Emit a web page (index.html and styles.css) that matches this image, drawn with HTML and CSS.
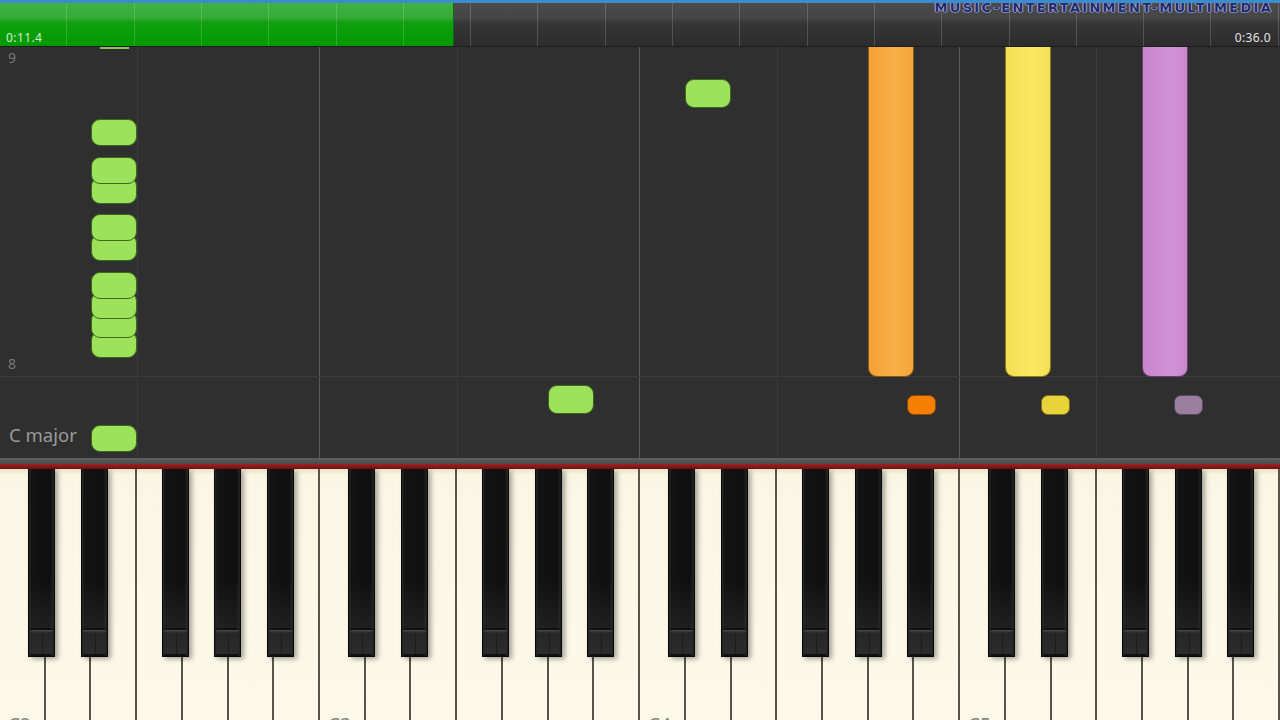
FILE: index.html
```html
<!DOCTYPE html>
<html>
<head>
<meta charset="utf-8">
<link rel="stylesheet" href="styles.css">
</head>
<body>
<div class="app">
  <header class="timeline">
    <div class="progress" style="width:454px"></div>
    <div class="rest"></div>
    <span class="time time-left">0:11.4</span>
    <span class="time time-right">0:36.0</span>
    <span class="watermark">MUSIC-ENTERTAINMENT-MULTIMEDIA</span>
  </header>

  <main class="roll">
    <div class="vline faint" style="left:137px"></div>
    <div class="vline bar" style="left:319px"></div>
    <div class="vline faint" style="left:457px"></div>
    <div class="vline bar" style="left:639px"></div>
    <div class="vline faint" style="left:777px"></div>
    <div class="vline bar" style="left:959px"></div>
    <div class="vline faint" style="left:1096px"></div>
    <div class="hline" style="top:329px"></div>

    <span class="octave" style="top:3px">9</span>
    <span class="octave" style="top:309px">8</span>
    <span class="key-label">C major</span>

    <div class="sliver"></div>

    <div class="note green" style="left:91px;top:72px"></div>
    <div class="note green" style="left:91px;top:130px"></div>
    <div class="note green" style="left:91px;top:110px"></div>
    <div class="note green" style="left:91px;top:187px"></div>
    <div class="note green" style="left:91px;top:167px"></div>
    <div class="note green" style="left:91px;top:284px"></div>
    <div class="note green" style="left:91px;top:264px"></div>
    <div class="note green" style="left:91px;top:245px"></div>
    <div class="note green" style="left:91px;top:225px"></div>
    <div class="note green" style="left:91px;top:378px"></div>
    <div class="note green" style="left:548px;top:338px;height:29px"></div>
    <div class="note green" style="left:685px;top:32px;height:29px"></div>

    <div class="note tall orange" style="left:868px"></div>
    <div class="note tall yellow" style="left:1005px"></div>
    <div class="note tall purple" style="left:1142px"></div>

    <div class="note small s-orange" style="left:907px"></div>
    <div class="note small s-yellow" style="left:1041px"></div>
    <div class="note small s-purple" style="left:1174px"></div>
  </main>

  <div class="rail"></div>
  <div class="redline"></div>

  <section class="keyboard">
    <div class="white c"><span class="kl">C2</span></div><div class="white"></div><div class="white"></div><div class="white"></div><div class="white"></div><div class="white"></div><div class="white"></div>
    <div class="white c"><span class="kl">C3</span></div><div class="white"></div><div class="white"></div><div class="white"></div><div class="white"></div><div class="white"></div><div class="white"></div>
    <div class="white c"><span class="kl">C4</span></div><div class="white"></div><div class="white"></div><div class="white"></div><div class="white"></div><div class="white"></div><div class="white"></div>
    <div class="white c"><span class="kl">C5</span></div><div class="white"></div><div class="white"></div><div class="white"></div><div class="white"></div><div class="white"></div><div class="white"></div>

    <div class="black" style="left:28px"><i></i></div>
    <div class="black" style="left:81px"><i></i></div>
    <div class="black" style="left:162px"><i></i></div>
    <div class="black" style="left:214px"><i></i></div>
    <div class="black" style="left:267px"><i></i></div>
    <div class="black" style="left:348px"><i></i></div>
    <div class="black" style="left:401px"><i></i></div>
    <div class="black" style="left:482px"><i></i></div>
    <div class="black" style="left:535px"><i></i></div>
    <div class="black" style="left:587px"><i></i></div>
    <div class="black" style="left:668px"><i></i></div>
    <div class="black" style="left:721px"><i></i></div>
    <div class="black" style="left:802px"><i></i></div>
    <div class="black" style="left:855px"><i></i></div>
    <div class="black" style="left:907px"><i></i></div>
    <div class="black" style="left:988px"><i></i></div>
    <div class="black" style="left:1041px"><i></i></div>
    <div class="black" style="left:1122px"><i></i></div>
    <div class="black" style="left:1175px"><i></i></div>
    <div class="black" style="left:1227px"><i></i></div>
  </section>
</div>
</body>
</html>
```

FILE: styles.css
```css
* { box-sizing: border-box; }
html, body {
  margin: 0;
  padding: 0;
  background: #2e2e2e;
}
.app {
  width: 1280px;
  height: 720px;
  overflow: hidden;
  display: flex;
  flex-direction: column;
  font-family: "Noto Sans", "Open Sans", sans-serif;
}

/* ---------- timeline ---------- */
.timeline {
  position: relative;
  height: 47px;
  flex: none;
  display: flex;
  border-top: 3px solid #3a8ccc;
  border-bottom: 1px solid #1e1e1e;
}
.timeline::after {
  content: "";
  position: absolute;
  inset: 0;
  pointer-events: none;
  background-image: repeating-linear-gradient(90deg, transparent 0 66.3px, rgba(255,255,255,0.16) 66.3px 67.3px);
}
.progress {
  flex: none;
  height: 100%;
  background: linear-gradient(#3fb23f 0%, #36ab36 35%, #10a010 45%, #009a00 100%);
  border-right: 1px solid #0b6a0b;
}
.rest {
  flex: 1;
  height: 100%;
  background: linear-gradient(#4b4b4b 0%, #454545 35%, #353535 50%, #2c2c2c 100%);
}
.time {
  position: absolute;
  bottom: 0;
  font-size: 12px;
  letter-spacing: 0.4px;
  z-index: 2;
}
.time-left { left: 6px; color: #d2f0c8; }
.time-right { right: 9px; color: #e4e4e4; }
.watermark {
  position: absolute;
  top: -3px;
  right: 7px;
  z-index: 2;
  font-family: "DejaVu Sans", sans-serif;
  font-weight: bold;
  font-size: 13px;
  letter-spacing: 2.3px;
  color: #1f2b68;
  text-shadow: 0 0 1px #c8d0f0, 1px 0 0 #8e98cc, -1px 0 0 #8e98cc, 0 1px 0 #6e78b0;
}

/* ---------- piano roll ---------- */
.roll {
  position: relative;
  height: 411px;
  flex: none;
  background: #2f2f2f;
  overflow: hidden;
}
.vline {
  position: absolute;
  top: 0;
  bottom: 0;
  width: 1px;
}
.vline.faint { background: #3b3b3b; }
.vline.bar { background: #595959; }
.hline {
  position: absolute;
  left: 0;
  right: 0;
  height: 1px;
  background: #3c3c3c;
}
.octave {
  position: absolute;
  left: 8px;
  font-size: 14px;
  color: #787878;
  line-height: 16px;
}
.key-label {
  position: absolute;
  left: 9px;
  top: 377px;
  font-size: 18.5px;
  line-height: 22px;
  color: #9a9a9a;
}
.sliver {
  position: absolute;
  left: 100px;
  top: 0;
  width: 29px;
  height: 2px;
  background: #8fbf5a;
}
.note {
  position: absolute;
  width: 46px;
  height: 27px;
  border-radius: 9px;
  border: 1.5px solid;
}
.green {
  background: #9ce25b;
  border-color: #3c6a1c;
}
.tall {
  top: -4px;
  height: 334px;
  border-radius: 0 0 9px 9px;
}
.orange {
  background: linear-gradient(90deg, #f3a236, #f8b048 60%, #f4a53a);
  border-color: #8c5a14;
}
.yellow {
  background: linear-gradient(90deg, #f4df52, #fbe964 60%, #f4e054);
  border-color: #8a7d1c;
}
.purple {
  background: linear-gradient(90deg, #c985cd, #d291d6 60%, #cb88cf);
  border-color: #6a4070;
}
.small {
  top: 348px;
  width: 29px;
  height: 20px;
  border-radius: 7px;
}
.s-orange { background: #f77f00; border-color: #8f4a06; }
.s-yellow { background: #e8d43a; border-color: #807018; }
.s-purple { background: #9a7d9f; border-color: #584860; }

/* ---------- rail ---------- */
.rail {
  height: 6px;
  flex: none;
  background: linear-gradient(#5e5e5e, #4a4a4a);
}
.redline {
  height: 5px;
  flex: none;
  background: linear-gradient(#a02222, #6e1414);
}

/* ---------- keyboard ---------- */
.keyboard {
  position: relative;
  flex: 1;
  display: flex;
  background: #fcf7e6;
}
.white {
  flex: 1;
  position: relative;
  overflow: hidden;
  background: linear-gradient(#e9e2c9 0, #fbf6e4 6px, #fdf9e8 100%);
  border-right: 2px solid #58544a;
}
.kl {
  position: absolute;
  left: 8px;
  bottom: -17px;
  font-size: 19px;
  line-height: 24px;
  color: #8a8780;
}
.black {
  position: absolute;
  top: 0;
  width: 27px;
  height: 188px;
  background: linear-gradient(90deg, #2a2a2a 0, #131313 2px, #0f0f0f 85%, #242424 100%);
  border: 1px solid #080808;
  border-top: none;
  box-shadow: 3px 2px 5px rgba(0,0,0,0.35);
}
.black::before {
  content: "";
  position: absolute;
  left: 1px;
  right: 1px;
  top: 0;
  bottom: 28px;
  background: linear-gradient(rgba(0,0,0,0) 70%, rgba(60,60,60,0.35) 100%);
}
.black i {
  position: absolute;
  left: 1px;
  right: 1px;
  bottom: 2px;
  height: 24px;
  background: linear-gradient(#4c4c4c 0, #3e3e3e 1px, #262626 3px, #2c2c2c 100%);
  border-radius: 1px;
}
.black i::after {
  content: "";
  position: absolute;
  left: 50%;
  top: 4px;
  bottom: 0;
  width: 1px;
  background: #1c1c1c;
}
```
